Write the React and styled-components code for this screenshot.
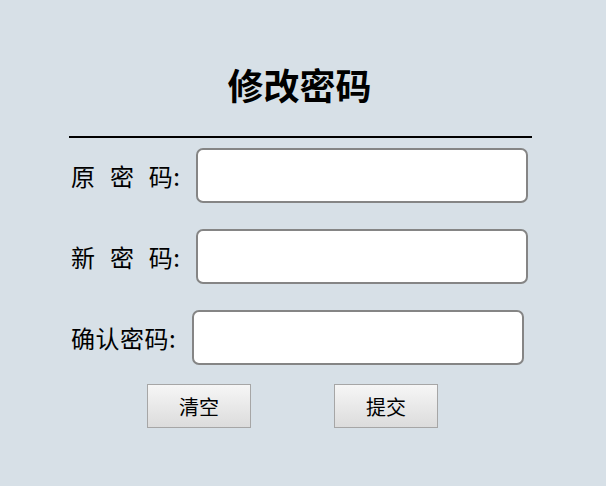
import React from 'react';
import styled, { createGlobalStyle } from 'styled-components';

const GlobalStyle = createGlobalStyle`
    html, body {
        margin: 0;
        padding: 0;
        background: #d7e0e7;
        min-height: 486px;
    }
    body {
        font-family: "Noto Sans CJK SC", "Noto Sans", sans-serif;
        color: #000;
    }
`;

const Wrapper = styled.div`
    width: 463px;
    margin-left: 69px;
    padding-top: 56px;
`;

const Title = styled.h1`
    margin: 0;
    font-size: 36px;
    font-weight: bold;
    line-height: 56px;
    text-align: center;
    padding-right: 2px;
`;

const Divider = styled.hr`
    margin: 24px 0 10px;
    border: none;
    border-top: 2px solid #000;
    height: 0;
`;

const Row = styled.div`
    display: flex;
    align-items: center;
    gap: 16px;
    padding-left: 2px;
    margin-bottom: 26px;
`;

const Label = styled.label`
    font-size: 24px;
    line-height: 55px;
    letter-spacing: 0.5px;
    word-spacing: ${p => (p.$spaced ? '8.5px' : '0')};
    white-space: pre;
`;

const Input = styled.input`
    box-sizing: border-box;
    width: 332px;
    height: 55px;
    border: 2px solid #858585;
    border-radius: 7px;
    background: #fff;
    outline: none;
    font-size: 20px;
    padding: 0 10px;
`;

const Buttons = styled.div`
    display: flex;
    gap: 83px;
    margin-top: -7px;
    padding-left: 78px;
`;

const Button = styled.button`
    box-sizing: border-box;
    width: 104px;
    height: 44px;
    border: 1px solid #a6a6a6;
    border-radius: 0;
    background: linear-gradient(to bottom, #f6f6f6, #dcdcdc);
    font-family: "Noto Sans CJK SC", "Noto Sans", sans-serif;
    font-size: 20px;
    color: #000;
    padding: 0;
`;

export default function App() {
    return (
        <>
            <GlobalStyle />
            <Wrapper>
                <Title>修改密码</Title>
                <Divider />
                <Row>
                    <Label $spaced>原 密 码:</Label>
                    <Input type="password" />
                </Row>
                <Row>
                    <Label $spaced>新 密 码:</Label>
                    <Input type="password" />
                </Row>
                <Row>
                    <Label>确认密码:</Label>
                    <Input type="password" />
                </Row>
                <Buttons>
                    <Button>清空</Button>
                    <Button>提交</Button>
                </Buttons>
            </Wrapper>
        </>
    );
}
